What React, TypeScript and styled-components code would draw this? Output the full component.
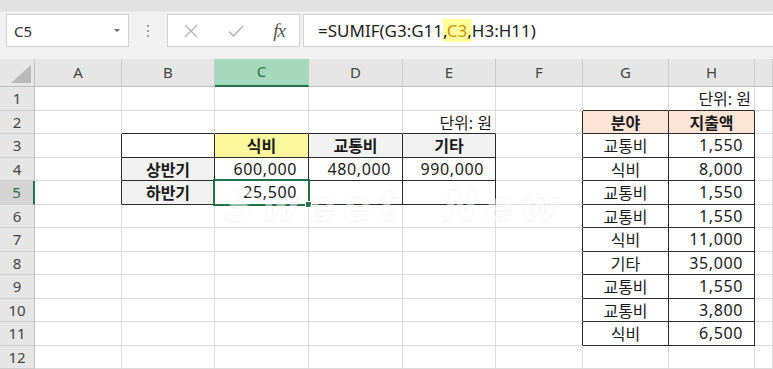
import * as React from "react";
import styled, { createGlobalStyle, css } from "styled-components";

const GlobalStyle = createGlobalStyle`
  html, body {
    margin: 0;
    padding: 0;
    background: #ffffff;
    overflow: hidden;
  }
  body {
    font-family: "Noto Sans", "Noto Sans CJK KR", sans-serif;
  }
`;

const GREEN = "#217346";
const GRID = "#dadada";
const DARK = "#2a2a2a";

const COLS = ["A", "B", "C", "D", "E", "F", "G", "H", ""];
const COL_WIDTHS = "35px 87px 93px 94px 94px 93px 87px 86px 86px 1fr";
const ROW_COUNT = 12;

type Align = "left" | "center" | "right";

interface CellData {
  v: string;
  bold?: boolean;
  align?: Align;
  fill?: string;
  num?: boolean;
}

const HEAD_GRAY = "#f2f2f2";
const HEAD_YELLOW = "#fbf79c";
const HEAD_PEACH = "#fce4d6";

const cells: Record<string, CellData> = {
  H1: { v: "단위: 원", align: "right" },
  E2: { v: "단위: 원", align: "right" },
  C3: { v: "식비", bold: true, align: "center", fill: HEAD_YELLOW },
  D3: { v: "교통비", bold: true, align: "center", fill: HEAD_GRAY },
  E3: { v: "기타", bold: true, align: "center", fill: HEAD_GRAY },
  B4: { v: "상반기", bold: true, align: "center", fill: HEAD_GRAY },
  C4: { v: "600,000", align: "right", num: true },
  D4: { v: "480,000", align: "right", num: true },
  E4: { v: "990,000", align: "right", num: true },
  B5: { v: "하반기", bold: true, align: "center", fill: HEAD_GRAY },
  C5: { v: "25,500", align: "right", num: true },
  G2: { v: "분야", bold: true, align: "center", fill: HEAD_PEACH },
  H2: { v: "지출액", bold: true, align: "center", fill: HEAD_PEACH },
};

const ledger: Array<[string, string]> = [
  ["교통비", "1,550"],
  ["식비", "8,000"],
  ["교통비", "1,550"],
  ["교통비", "1,550"],
  ["식비", "11,000"],
  ["기타", "35,000"],
  ["교통비", "1,550"],
  ["교통비", "3,800"],
  ["식비", "6,500"],
];
ledger.forEach(([k, n], i) => {
  cells[`G${i + 3}`] = { v: k, align: "center" };
  cells[`H${i + 3}`] = { v: n, align: "right", num: true };
});

// tables with dark borders: B3:E5 and G2:H11 (column index: A = 0)
const inTable = (r: number, c: number) =>
  (r >= 3 && r <= 5 && c >= 1 && c <= 4) || (r >= 2 && r <= 11 && c >= 6 && c <= 7);

/* ---------- toolbar ---------- */

const Toolbar = styled.div`
  height: 59px;
  box-sizing: border-box;
  padding: 14px 0 12px 6px;
  display: flex;
  align-items: stretch;
  background: linear-gradient(#e2e2e2 0, #e2e2e2 11px, #f1f1f1 12px, #f1f1f1 100%);
`;

const Box = styled.div`
  background: #ffffff;
  border: 1px solid #d0d0d0;
  box-sizing: border-box;
  display: flex;
  align-items: center;
`;

const NameBox = styled(Box)`
  width: 123px;
  padding: 0 8px 0 7px;
  justify-content: space-between;
  font-size: 15px;
  color: #333;
`;

const Caret = styled.span`
  width: 0;
  height: 0;
  border-left: 3px solid transparent;
  border-right: 3px solid transparent;
  border-top: 3px solid #6a6a6a;
`;

const Grip = styled.div`
  width: 38px;
  display: flex;
  flex-direction: column;
  align-items: center;
  justify-content: center;
  gap: 3px;
`;

const Dot = styled.span`
  width: 2px;
  height: 2px;
  background: #a0a0a0;
`;

const FxBox = styled(Box)`
  width: 133px;
  padding: 0 14px 0 16px;
  justify-content: space-between;
  margin-right: 3px;
`;

const FxLabel = styled.span`
  font-family: "Liberation Serif", serif;
  font-style: italic;
  font-size: 19px;
  color: #555;
  letter-spacing: -1px;
`;

const FormulaBar = styled(Box)`
  flex: 1;
  border-right: none;
  padding-left: 14px;
  font-size: 17px;
  color: #222;
  white-space: nowrap;
`;

const RefMark = styled.span`
  background: #ffff9c;
`;

const RefText = styled.span`
  color: #c8950a;
`;

/* ---------- sheet ---------- */

const Sheet = styled.div`
  position: relative;
  display: grid;
  grid-template-columns: ${COL_WIDTHS};
  grid-template-rows: 28px repeat(${ROW_COUNT}, 23.5px);
  height: 310px;
  overflow: hidden;
`;

const Corner = styled.div`
  background: #e6e6e6;
  border-right: 1px solid #c3c3c3;
  border-bottom: 1px solid #bcbcbc;
  display: flex;
  align-items: flex-end;
  justify-content: flex-end;
  padding: 0 3px 3px 0;
`;

const ColHead = styled.div<{ $active?: boolean }>`
  background: ${(p) => (p.$active ? "#a6d8bb" : "#e6e6e6")};
  border-right: 1px solid ${(p) => (p.$active ? "#a6d8bb" : "#cbcbcb")};
  border-bottom: ${(p) => (p.$active ? `2px solid ${GREEN}` : "1px solid #bcbcbc")};
  color: ${(p) => (p.$active ? "#2d6f48" : "#444")};
  font-size: 15px;
  display: flex;
  align-items: center;
  justify-content: center;
  padding-bottom: 2px;
  box-sizing: border-box;
`;

const RowHead = styled.div<{ $active?: boolean }>`
  background: ${(p) => (p.$active ? "#d4d4d4" : "#e6e6e6")};
  border-right: ${(p) => (p.$active ? `2px solid ${GREEN}` : "1px solid #c3c3c3")};
  border-bottom: 1px solid #cdcdcd;
  color: ${(p) => (p.$active ? "#2d6f48" : "#444")};
  font-size: 15px;
  display: flex;
  align-items: center;
  justify-content: center;
  box-sizing: border-box;
`;

const Cell = styled.div<{
  $fill?: string;
  $align: Align;
  $bold?: boolean;
  $num?: boolean;
  $rightDark?: boolean;
  $bottomDark?: boolean;
}>`
  position: relative;
  box-sizing: border-box;
  background: ${(p) => p.$fill ?? "#ffffff"};
  border-right: 1px solid ${(p) => (p.$rightDark ? DARK : GRID)};
  border-bottom: 1px solid ${(p) => (p.$bottomDark ? DARK : GRID)};
  display: flex;
  align-items: center;
  justify-content: ${(p) =>
    p.$align === "center" ? "center" : p.$align === "right" ? "flex-end" : "flex-start"};
  padding: 0 ${(p) => (p.$num ? "11px" : "3px")} 0 3px;
  font-size: 16px;
  color: #1a1a1a;
  white-space: nowrap;
  font-family: "Noto Sans", "Noto Sans CJK KR", sans-serif;
  ${(p) =>
    p.$bold &&
    css`
      font-weight: 700;
      font-family: "Noto Sans CJK KR", sans-serif;
    `}
  ${(p) =>
    p.$num &&
    css`
      letter-spacing: 0.6px;
    `}
`;

const Selection = styled.div`
  position: absolute;
  top: -2px;
  left: -2px;
  right: -2px;
  bottom: -2px;
  border: 2px solid ${GREEN};
  z-index: 2;
  pointer-events: none;
`;

const FillHandle = styled.span`
  position: absolute;
  right: -4px;
  bottom: -4px;
  width: 5px;
  height: 5px;
  background: ${GREEN};
  border: 1px solid #ffffff;
`;

const Watermark = styled.div`
  position: absolute;
  left: 224px;
  top: 127px;
  font-family: "DejaVu Sans", sans-serif;
  font-style: italic;
  font-weight: 700;
  font-size: 42px;
  letter-spacing: 7px;
  word-spacing: 16px;
  line-height: 1;
  color: rgba(255, 255, 255, 0.55);
  -webkit-text-stroke: 1px rgba(0, 0, 0, 0.06);
  pointer-events: none;
  z-index: 3;
`;

const CancelIcon = () => (
  <svg width="14" height="14" viewBox="0 0 14 14">
    <path d="M1 1 L13 13 M13 1 L1 13" stroke="#b4b4b4" strokeWidth="1.4" fill="none" />
  </svg>
);

const CheckIcon = () => (
  <svg width="16" height="14" viewBox="0 0 16 14">
    <path d="M1 7.5 L5.5 12 L15 2" stroke="#b4b4b4" strokeWidth="1.5" fill="none" />
  </svg>
);

const CornerMark = () => (
  <svg width="20" height="18" viewBox="0 0 20 18">
    <polygon points="20,0 20,18 0,18" fill="#b9b9b9" />
  </svg>
);

export default function App() {
  const rows = Array.from({ length: ROW_COUNT }, (_, i) => i + 1);

  return (
    <>
      <GlobalStyle />
      <Toolbar>
        <NameBox>
          C5
          <Caret />
        </NameBox>
        <Grip>
          <Dot />
          <Dot />
          <Dot />
        </Grip>
        <FxBox>
          <CancelIcon />
          <CheckIcon />
          <FxLabel>fx</FxLabel>
        </FxBox>
        <FormulaBar>
          =SUMIF(G3:G11
          <RefMark>
            ,<RefText>C3</RefText>,
          </RefMark>
          H3:H11)
        </FormulaBar>
      </Toolbar>

      <Sheet>
        <Corner>
          <CornerMark />
        </Corner>
        {COLS.map((c, i) => (
          <ColHead key={`h${i}`} $active={c === "C"}>
            {c}
          </ColHead>
        ))}

        {rows.map((r) => (
          <React.Fragment key={r}>
            <RowHead $active={r === 5}>{r}</RowHead>
            {COLS.map((c, ci) => {
              const data = c ? cells[`${c}${r}`] : undefined;
              const selected = c === "C" && r === 5;
              return (
                <Cell
                  key={`${c}${r}-${ci}`}
                  $fill={data?.fill}
                  $align={data?.align ?? "left"}
                  $bold={data?.bold}
                  $num={data?.num}
                  $rightDark={inTable(r, ci) || inTable(r, ci + 1)}
                  $bottomDark={inTable(r, ci) || inTable(r + 1, ci)}
                >
                  {data?.v}
                  {selected && (
                    <Selection>
                      <FillHandle />
                    </Selection>
                  )}
                </Cell>
              );
            })}
          </React.Fragment>
        ))}
        <Watermark>Sweet New</Watermark>
      </Sheet>
    </>
  );
}
